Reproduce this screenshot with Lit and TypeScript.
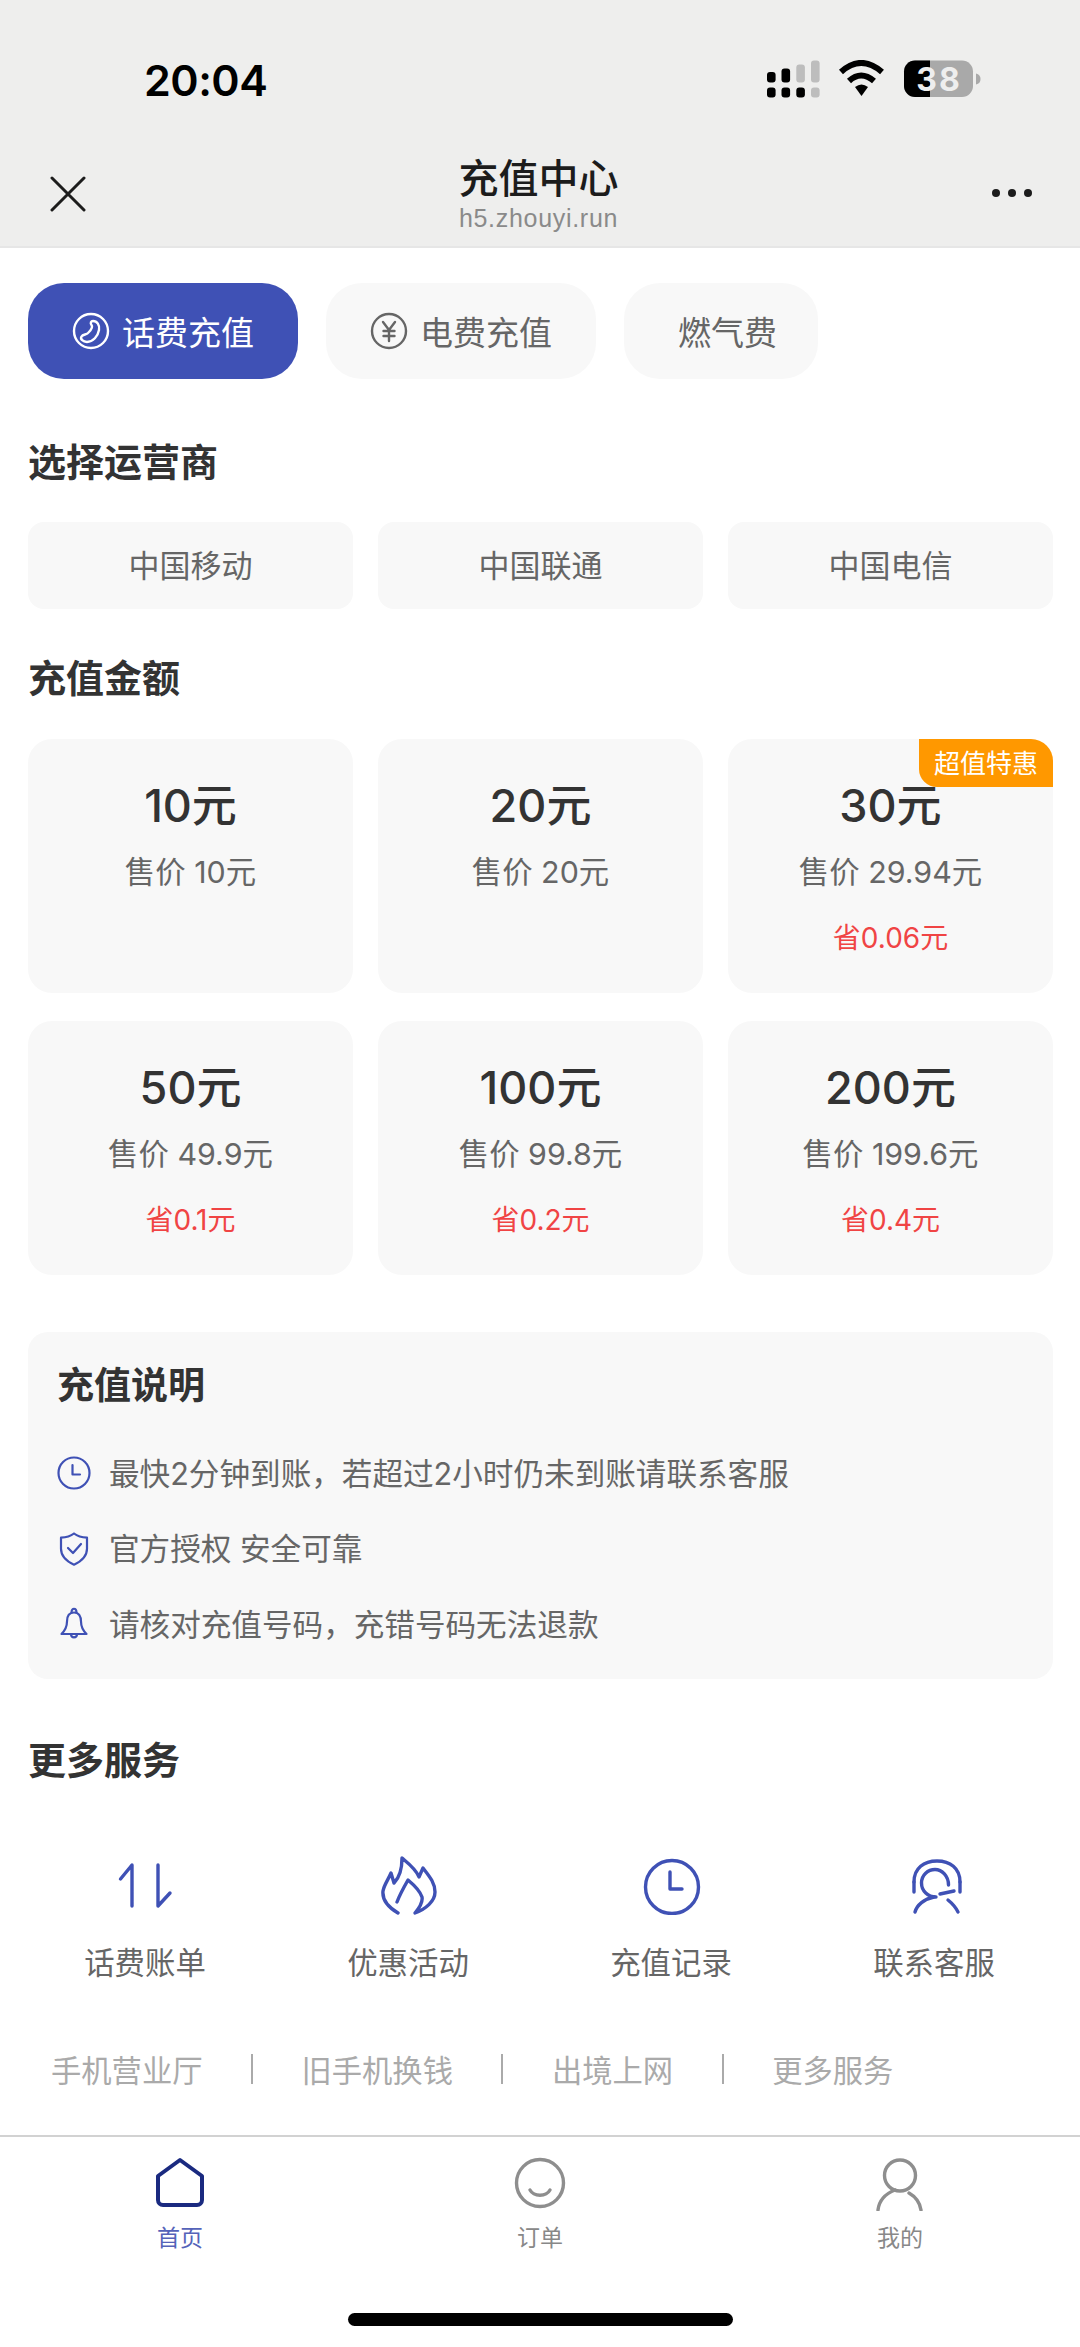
import { LitElement, html, css } from "lit";
import { customElement } from "lit/decorators.js";

type Plan = { amount: string; price: string; save?: string; badge?: string };

const plans: Plan[] = [
  { amount: "10元", price: "售价 10元" },
  { amount: "20元", price: "售价 20元" },
  { amount: "30元", price: "售价 29.94元", save: "省0.06元", badge: "超值特惠" },
  { amount: "50元", price: "售价 49.9元", save: "省0.1元" },
  { amount: "100元", price: "售价 99.8元", save: "省0.2元" },
  { amount: "200元", price: "售价 199.6元", save: "省0.4元" },
];

@customElement("app-root")
export class AppRoot extends LitElement {
  static styles = css`
    :host {
      display: block;
      width: 1080px;
      height: 2347px;
      background: #fff;
      overflow: hidden;
      font-family: Inter, "Noto Sans CJK SC", sans-serif;
      color: #333;
    }
    svg { display: block; fill: none; stroke-linecap: round; stroke-linejoin: round; }
    .header {
      height: 246px;
      background: #eeeeed;
      border-bottom: 2px solid #e6e6e6;
      display: flex;
      flex-direction: column;
    }
    .status {
      height: 150px;
      padding: 60px 99px 0 144px;
      display: flex;
      justify-content: space-between;
      align-items: flex-start;
      box-sizing: border-box;
    }
    .time {
      font-weight: 600;
      font-size: 43px;
      line-height: 40px;
      color: #000;
      letter-spacing: -0.5px;
    }
    .bat-text { font-weight: 700; font-size: 32px; letter-spacing: 2px; }
    .navbar {
      flex: 1;
      display: flex;
      justify-content: space-between;
      align-items: flex-start;
      padding: 0 47px 0 50px;
    }
    .nav-x { margin-top: 26px; stroke: #1c1c1c; stroke-width: 3; }
    .nav-dots { margin-top: 38px; fill: #1c1c1c; }
    .nav-title {
      display: flex;
      flex-direction: column;
      align-items: center;
      margin-top: 7px;
    }
    .nav-title b {
      font-weight: 500;
      font-size: 40px;
      line-height: 44px;
      color: #1c1c1c;
    }
    .nav-title span {
      font-family: "Liberation Sans", sans-serif;
      font-size: 25px;
      line-height: 30px;
      color: #8a8a8a;
      letter-spacing: 0.7px;
      margin-top: 2px;
    }
    .main { padding: 35px 27px 0 28px; }
    .tabs { display: flex; gap: 28px; }
    .tab {
      height: 96px;
      box-sizing: border-box;
      border-radius: 36px;
      background: #f8f8f8;
      display: flex;
      align-items: center;
      gap: 12px;
      padding: 0 44px;
      font-size: 33px;
      color: #666;
    }
    .tab.on { background: #3f51b5; color: #fff; }
    .tab.plain { padding: 0 41px 0 54px; }
    .tab svg { stroke: currentColor; stroke-width: 2.4; flex: none; }
    h2 {
      margin: 0;
      font-size: 38px;
      line-height: 50px;
      font-weight: 700;
      color: #333;
    }
    .h-op { margin-top: 58px; }
    .ops {
      display: grid;
      grid-template-columns: repeat(3, 1fr);
      gap: 25px;
      margin-top: 35px;
    }
    .op {
      height: 87px;
      box-sizing: border-box;
      padding-bottom: 4px;
      border-radius: 16px;
      background: #f8f8f8;
      display: flex;
      align-items: center;
      justify-content: center;
      font-size: 31px;
      color: #666;
    }
    .h-amt { margin-top: 44px; }
    .plans {
      display: grid;
      grid-template-columns: repeat(3, 1fr);
      column-gap: 25px;
      row-gap: 28px;
      margin-top: 36px;
    }
    .plan {
      position: relative;
      height: 254px;
      box-sizing: border-box;
      padding-top: 37px;
      border-radius: 24px;
      background: #f8f8f8;
      display: flex;
      flex-direction: column;
      align-items: center;
    }
    .amount { font-size: 45px; line-height: 60px; font-weight: 500; color: #333; }
    .price { font-size: 30.4px; line-height: 44px; margin-top: 14px; color: #666; }
    .save { font-size: 28px; line-height: 40px; margin-top: 24px; color: #f04444; }
    .badge {
      position: absolute;
      top: 0;
      right: 0;
      width: 134px;
      height: 48px;
      box-sizing: border-box;
      padding-bottom: 3px;
      background: #ff9800;
      color: #fff;
      font-size: 26px;
      display: flex;
      align-items: center;
      justify-content: center;
      border-radius: 0 22px 0 18px;
    }
    .note {
      margin-top: 57px;
      height: 347px;
      box-sizing: border-box;
      padding: 29px 30px 0 29px;
      border-radius: 20px;
      background: #f8f8f8;
    }
    .note h2 { font-size: 37px; }
    .note-list { display: flex; flex-direction: column; gap: 25.5px; margin-top: 37px; }
    .note-row {
      display: flex;
      align-items: center;
      gap: 18px;
      height: 50px;
      font-size: 30.6px;
      color: #666;
    }
    .note-row span { padding-bottom: 3px; }
    .note-row svg { stroke: #3f51b5; stroke-width: 2.2; flex: none; }
    .h-more { margin-top: 56px; }
    .services {
      display: grid;
      grid-template-columns: repeat(4, 263px);
      margin: 70px 0 0 -14.5px;
    }
    .svc { display: flex; flex-direction: column; align-items: center; }
    .svc svg { stroke: #3f51b5; stroke-width: 3.4; }
    .svc span { margin-top: 26px; font-size: 30.4px; line-height: 44px; color: #666; }
    .links {
      display: flex;
      align-items: center;
      gap: 48.5px;
      margin: 64px 0 0 23px;
      height: 40px;
      font-size: 30.3px;
      color: #aaa;
    }
    .links i { width: 2px; height: 30px; background: #aaa; }
    .tabbar {
      margin-top: 46px;
      height: 210px;
      box-sizing: border-box;
      border-top: 2px solid #d2d2d2;
      display: grid;
      grid-template-columns: repeat(3, 360px);
      align-content: start;
      padding-top: 20px;
    }
    .bar-item {
      display: flex;
      flex-direction: column;
      align-items: center;
      font-size: 23px;
      line-height: 34px;
      color: #888;
    }
    .bar-item span { margin-top: 10px; }
    .bar-item svg { stroke: #8e8e8e; stroke-width: 3.4; }
    .bar-item.on { color: #5563b9; }
    .bar-item.on svg { stroke: #1a2a80; stroke-width: 4; }
    .home-line {
      grid-column: 1 / -1;
      justify-self: center;
      width: 385px;
      height: 13px;
      border-radius: 7px;
      background: #000;
      margin-top: 58px;
    }
  `;

  private statusIcons() {
    return html`<svg width="215" height="40" viewBox="766 60 215 40">
      <g fill="#000" stroke="none">
        <rect x="767" y="72" width="8.6" height="10.5" rx="3" />
        <rect x="781.5" y="68.5" width="8.6" height="14" rx="3" />
        <rect x="767" y="87.5" width="8.6" height="10" rx="3" />
        <rect x="781.5" y="87.5" width="8.6" height="10" rx="3" />
        <rect x="796.3" y="87.5" width="8.6" height="10" rx="3" />
      </g>
      <g fill="#bdbdbd" stroke="none">
        <rect x="796.3" y="64.5" width="8.6" height="18" rx="3" />
        <rect x="811" y="60.5" width="8.6" height="22" rx="3" />
        <rect x="811" y="87.5" width="8.6" height="10" rx="3" />
      </g>
      <path d="M841 72 Q861 54 882 72" stroke="#000" stroke-width="6" stroke-linecap="butt" />
      <path d="M849 81 Q861 70 874 81" stroke="#000" stroke-width="6" stroke-linecap="butt" />
      <path d="M855 87 Q861.5 82 868 87 L861.5 96 Z" fill="#000" stroke="none" />
      <rect x="904" y="60.5" width="69" height="36.500" rx="11" fill="#a9a9a9" stroke="none" />
      <path d="M930 60.5 H915 a11 11 0 0 0 -11 11 V86 a11 11 0 0 0 11 11 H930 Z" fill="#000" stroke="none" />
      <path d="M976 73.5 q4.5 1 4.5 5.5 t-4.5 5.5 Z" fill="#a9a9a9" stroke="none" />
      <text x="939" y="91" text-anchor="middle" fill="#eee" stroke="none" class="bat-text">38</text>
    </svg>`;
  }

  private phoneIcon() {
    return html`<svg width="38" height="38" viewBox="0 0 38 38">
      <circle cx="19" cy="19" r="17" />
      <path d="M21 9C25 9 28 13 27 18 26 24 21 30 15 30 11 30 8 27 9.500 24.500 11 22 15 23 16.500 20.500 19 18 21 15 19.500 13 18 11 19 9 21 9Z" />
    </svg>`;
  }

  private yuanIcon() {
    return html`<svg width="38" height="38" viewBox="0 0 38 38">
      <circle cx="19" cy="19" r="17" />
      <path d="M13 10l6 8 6-8M19 18v11M13.500 19h11M13.500 24h11" />
    </svg>`;
  }

  render() {
    return html`
      <div class="header">
        <div class="status">
          <span class="time">20:04</span>
          ${this.statusIcons()}
        </div>
        <div class="navbar">
          <svg class="nav-x" width="36" height="36" viewBox="0 0 36 36"><path d="M2 2l32 32M34 2L2 34" /></svg>
          <div class="nav-title"><b>充值中心</b><span>h5.zhouyi.run</span></div>
          <svg class="nav-dots" width="42" height="10" viewBox="0 0 42 10">
            <circle cx="5" cy="5" r="4" /><circle cx="21" cy="5" r="4" /><circle cx="37" cy="5" r="4" />
          </svg>
        </div>
      </div>
      <div class="main">
        <div class="tabs">
          <div class="tab on">${this.phoneIcon()}<span>话费充值</span></div>
          <div class="tab">${this.yuanIcon()}<span>电费充值</span></div>
          <div class="tab plain"><span>燃气费</span></div>
        </div>
        <h2 class="h-op">选择运营商</h2>
        <div class="ops">
          <div class="op">中国移动</div>
          <div class="op">中国联通</div>
          <div class="op">中国电信</div>
        </div>
        <h2 class="h-amt">充值金额</h2>
        <div class="plans">
          ${plans.map(
            (p) => html`<div class="plan">
              ${p.badge ? html`<div class="badge">${p.badge}</div>` : ""}
              <div class="amount">${p.amount}</div>
              <div class="price">${p.price}</div>
              ${p.save ? html`<div class="save">${p.save}</div>` : ""}
            </div>`
          )}
        </div>
        <div class="note">
          <h2>充值说明</h2>
          <div class="note-list">
            <div class="note-row">
              <svg width="34" height="34" viewBox="0 0 34 34"><circle cx="17" cy="17" r="15.500" /><path d="M15.500 9v9.500H23" /></svg>
              <span>最快2分钟到账，若超过2小时仍未到账请联系客服</span>
            </div>
            <div class="note-row">
              <svg width="34" height="34" viewBox="0 0 34 34"><path d="M17 1.500c3.500 2.800 8 4 13 4.200v11c0 7-5.500 12.500-13 16-7.500-3.500-13-9-13-16v-11c5-.2 9.500-1.400 13-4.200z" /><path d="M11 16l5 5 8-9" /></svg>
              <span>官方授权 安全可靠</span>
            </div>
            <div class="note-row">
              <svg width="34" height="34" viewBox="0 0 34 34"><path d="M17 5.500c-5 0-7 4-7 9 0 6-2 9-5.500 12.500h25c-3.500-3.500-5.500-6.500-5.500-12.500 0-5-2-9-7-9z" /><path d="M14.500 5.500c0-5 5-5 5 0M14 27c0 4.500 6 4.500 6 0" /></svg>
              <span>请核对充值号码，充错号码无法退款</span>
            </div>
          </div>
        </div>
        <h2 class="h-more">更多服务</h2>
        <div class="services">
          <div class="svc">
            <svg width="60" height="60" viewBox="0 0 60 60"><path d="M17 51V10L5.500 24M43 10V51L55 38" /></svg>
            <span>话费账单</span>
          </div>
          <div class="svc">
            <svg width="60" height="60" viewBox="0 0 60 60"><path d="M20 58C10 52 4 45 5 36 6 30 10 25 13 18L16 28C22 22 24 12 24 3 30 8 38 14 41 22L45 13C52 22 57 28 57 37 57 46 48 54 37 58 42 52 45 47 44 42 42 36 36 30 30 25 26 32 22 39 19 47" /></svg>
            <span>优惠活动</span>
          </div>
          <div class="svc">
            <svg width="60" height="60" viewBox="-1 0 60 60"><circle cx="30" cy="32" r="26.500" /><path d="M28 17v17h12" /></svg>
            <span>充值记录</span>
          </div>
          <div class="svc">
            <svg width="60" height="60" viewBox="-2 0 60 60"><path d="M8 27C8 13 18 6 31 6S54 13 54 27" /><path d="M8 27v10M54 27v10" /><path d="M30 42C22 42 15.500 36 15.500 28S22 14.500 29 14.500 42.500 21 42.500 30" /><path d="M34 39L48 36" /><path d="M9 57C11 50 18 44 28 42M42 45C47 49 50 53 52 57" /></svg>
            <span>联系客服</span>
          </div>
        </div>
        <div class="links">
          <span>手机营业厅</span><i></i><span>旧手机换钱</span><i></i><span>出境上网</span><i></i><span>更多服务</span>
        </div>
      </div>
      <div class="tabbar">
        <div class="bar-item on">
          <svg width="54" height="54" viewBox="0 0 54 54"><path d="M27 3L49 19V43a5 5 0 0 1-5 5H10a5 5 0 0 1-5-5V19Z" /></svg>
          <span>首页</span>
        </div>
        <div class="bar-item">
          <svg width="54" height="54" viewBox="0 0 54 54"><circle cx="27" cy="26" r="23.500" /><path d="M17 33c4 7 16 7 20 0" /></svg>
          <span>订单</span>
        </div>
        <div class="bar-item">
          <svg width="54" height="54" viewBox="0 0 54 54"><ellipse cx="27" cy="18.500" rx="15.500" ry="15.500" /><path d="M5 53C6 44 12 37 22 33M36 36C43 40 47 46 48 53" /></svg>
          <span>我的</span>
        </div>
        <div class="home-line"></div>
      </div>
    `;
  }
}
